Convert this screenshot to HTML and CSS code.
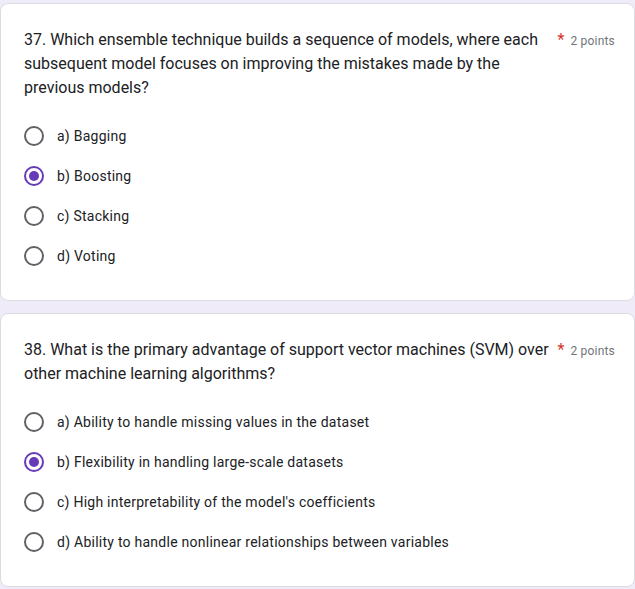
FILE: index.html
```html
<!DOCTYPE html>
<html>
<head>
<meta charset="utf-8">
<link rel="stylesheet" href="styles.css">
</head>
<body>
<div class="page">
  <div class="card">
    <div class="head">
      <div class="title">37. Which ensemble technique builds a sequence of models, where each subsequent model focuses on improving the mistakes made by the previous models?</div>
      <div class="points"><span class="req">*</span><span class="pts">2 points</span></div>
    </div>
    <div class="options">
      <div class="opt"><span class="radio"></span><span class="label">a) Bagging</span></div>
      <div class="opt"><span class="radio on"></span><span class="label">b) Boosting</span></div>
      <div class="opt"><span class="radio"></span><span class="label">c) Stacking</span></div>
      <div class="opt"><span class="radio"></span><span class="label">d) Voting</span></div>
    </div>
  </div>
  <div class="card">
    <div class="head">
      <div class="title">38. What is the primary advantage of support vector machines (SVM) over other machine learning algorithms?</div>
      <div class="points"><span class="req">*</span><span class="pts">2 points</span></div>
    </div>
    <div class="options">
      <div class="opt"><span class="radio"></span><span class="label">a) Ability to handle missing values in the dataset</span></div>
      <div class="opt"><span class="radio on"></span><span class="label">b) Flexibility in handling large-scale datasets</span></div>
      <div class="opt"><span class="radio"></span><span class="label">c) High interpretability of the model's coefficients</span></div>
      <div class="opt"><span class="radio"></span><span class="label">d) Ability to handle nonlinear relationships between variables</span></div>
    </div>
  </div>
</div>
</body>
</html>
```

FILE: styles.css
```css
html, body {
  margin: 0;
  padding: 0;
  background: #f0ebf8;
  font-family: Roboto, "Liberation Sans", Arial, sans-serif;
  color: #202124;
}
.page {
  padding-top: 3px;
}
.card {
  box-sizing: border-box;
  width: 635px;
  background: #fff;
  border: 1px solid #dadce0;
  border-radius: 8px;
  padding: 24px 19px 24px 23px;
  margin-bottom: 12px;
}
.head {
  display: flex;
  align-items: flex-start;
}
.title {
  flex: 1;
  font-size: 16px;
  line-height: 24px;
  letter-spacing: 0;
  color: #202124;
}
.points {
  flex: none;
  margin-left: 2px;
  display: flex;
  align-items: baseline;
  line-height: 24px;
}
.req {
  color: #d93025;
  font-size: 16px;
  margin-right: 6px;
}
.pts {
  font-size: 12px;
  color: #70757a;
  letter-spacing: 0.2px;
}
.options {
  margin-top: 16px;
  display: flex;
  flex-direction: column;
}
.opt {
  display: flex;
  align-items: center;
  height: 40px;
}
.radio {
  box-sizing: border-box;
  width: 20px;
  height: 20px;
  border: 2px solid #5f6368;
  border-radius: 50%;
  margin-right: 13px;
  flex: none;
  position: relative;
}
.radio.on {
  border-color: #673ab7;
}
.radio.on::after {
  content: "";
  position: absolute;
  left: 3px;
  top: 3px;
  width: 10px;
  height: 10px;
  border-radius: 50%;
  background: #673ab7;
}
.label {
  font-size: 14px;
  line-height: 20px;
  letter-spacing: 0.25px;
  color: #202124;
}
```
